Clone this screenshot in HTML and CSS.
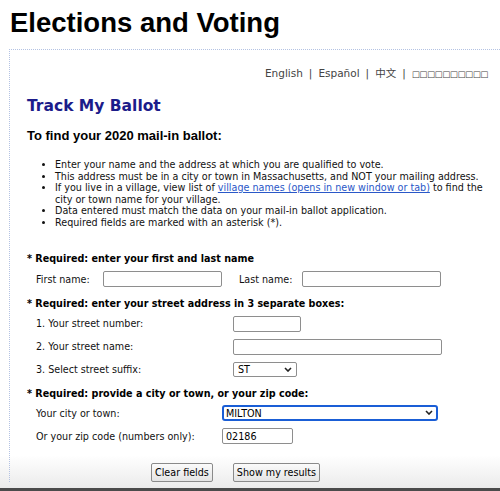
FILE: index.html
```html
<!DOCTYPE html>
<html lang="en">

<head>
    <meta charset="UTF-8">
    <meta name="viewport" content="width=device-width, initial-scale=1.0">
    <title>Track My Ballot</title>
    <link rel="stylesheet" href="styles.css">
</head>

<body>
    <h1 class="page-title">Elections and Voting</h1>

    <div class="panel">
        <div class="lang-bar">
            <a href="#">English</a><span class="sep">|</span><a href="#">Español</a><span class="sep">|</span><a href="#">中文</a><span class="sep">|</span><a href="#" class="tofu">□□□□□□□□□□</a>
        </div>

        <h2 class="app-title">Track My Ballot</h2>
        <h3 class="intro">To find your 2020 mail-in ballot:</h3>

        <ul class="notes">
            <li>Enter your name and the address at which you are qualified to vote.</li>
            <li>This address must be in a city or town in Massachusetts, and NOT your mailing address.</li>
            <li>If you live in a village, view list of <a href="#">village names (opens in new window or tab)</a> to find the city or town name for your village.</li>
            <li>Data entered must match the data on your mail-in ballot application.</li>
            <li>Required fields are marked with an asterisk (*).</li>
        </ul>

        <form class="ballot-form" onsubmit="return false">
            <p class="req req-first">* Required: enter your first and last name</p>
            <div class="name-row">
                <label for="firstName" class="first-label">First name:</label>
                <input type="text" id="firstName" class="first-input">
                <label for="lastName" class="last-label">Last name:</label>
                <input type="text" id="lastName" class="last-input">
            </div>

            <p class="req">* Required: enter your street address in 3 separate boxes:</p>
            <div class="field-grid street-grid">
                <label for="streetNo">1. Your street number:</label>
                <input type="text" id="streetNo" class="w-number">

                <label for="streetName">2. Your street name:</label>
                <input type="text" id="streetName" class="w-street">

                <label for="suffix">3. Select street suffix:</label>
                <span class="select-wrap w-suffix">
                    <select id="suffix">
                        <option>ST</option>
                        <option>AVE</option>
                        <option>RD</option>
                    </select>
                    <svg class="chev" width="8" height="5" viewBox="0 0 8 5"><path d="M1 1l3 3 3-3" fill="none" stroke="#222" stroke-width="1.6"/></svg>
                </span>
            </div>

            <p class="req">* Required: provide a city or town, or your zip code:</p>
            <div class="field-grid city-grid">
                <label for="city">Your city or town:</label>
                <span class="select-wrap w-city">
                    <select id="city" class="focused">
                        <option>MILTON</option>
                    </select>
                    <svg class="chev" width="8" height="5" viewBox="0 0 8 5"><path d="M1 1l3 3 3-3" fill="none" stroke="#222" stroke-width="1.6"/></svg>
                </span>

                <label for="zip">Or your zip code (numbers only):</label>
                <input type="text" id="zip" class="w-zip" value="02186">
            </div>

            <div class="actions">
                <button type="reset">Clear fields</button>
                <button type="submit">Show my results</button>
            </div>
        </form>
    </div>
</body>

</html>
```

FILE: styles.css
```css
html {
    height: 491px;
}

body {
    margin: 0;
    height: 491px;
    overflow: hidden;
    font-family: "DejaVu Sans", Verdana, sans-serif;
    font-size: 9.6px;
    color: #111;
    background: linear-gradient(to bottom, #fff 0, #fff 455px, #ebebeb 488px, #4b4b4b 488px, #4b4b4b 491px);
}

.page-title {
    margin: 8px 0 11px 10px;
    font-family: "Liberation Sans", Arial, sans-serif;
    font-size: 27.5px;
    line-height: 30px;
    font-weight: bold;
    color: #000;
}

.panel {
    margin-left: 9px;
    padding: 17px 12px 0 17px;
    border-top: 1px dotted #b3c2e3;
    border-left: 1px dotted #b3c2e3;
}

.lang-bar {
    text-align: right;
    font-size: 10.5px;
    line-height: 13px;
    color: #444;
}

.lang-bar a {
    color: #444;
    text-decoration: none;
    font-family: "DejaVu Sans", "Noto Sans CJK SC", sans-serif;
}

.lang-bar .sep {
    margin: 0 6px;
}

.lang-bar .tofu {
    font-size: 8.5px;
    letter-spacing: -0.4px;
}

.app-title {
    margin: 16px 0 0;
    font-size: 15.5px;
    line-height: 19px;
    color: #1c1c8a;
}

.intro {
    margin: 12px 0 0;
    font-family: "Liberation Sans", Arial, sans-serif;
    font-size: 13px;
    line-height: 15px;
    color: #000;
}

.notes {
    margin: 16px 0 0;
    padding-left: 28px;
    line-height: 11.6px;
}

.notes a {
    color: #2a58c8;
}

.req {
    margin: 11px 0 0;
    font-weight: bold;
    line-height: 11.5px;
    color: #000;
}

.req-first {
    margin-top: 24px;
}

.name-row {
    display: flex;
    align-items: center;
    margin-top: 7px;
    padding-left: 9px;
}

.first-label {
    width: 67px;
}

.first-input {
    width: 119px;
}

.last-label {
    width: 63px;
    margin-left: 17px;
}

.last-input {
    width: 139px;
}

.field-grid {
    display: grid;
    align-items: center;
    justify-items: start;
    row-gap: 7px;
    margin-top: 6px;
    padding-left: 9px;
}

.street-grid {
    grid-template-columns: 197px auto;
}

.city-grid {
    grid-template-columns: 186px auto;
}

input[type="text"],
select {
    box-sizing: border-box;
    height: 16px;
    margin: 0;
    padding: 0 3px;
    font-family: "DejaVu Sans", Verdana, sans-serif;
    font-size: 9.6px;
    color: #000;
    background: #fff;
    border: 1px solid #8e8e8e;
    border-radius: 2px;
    outline: none;
}

.w-number {
    width: 68px;
}

.w-street {
    width: 209px;
}

.w-zip {
    width: 71px;
    height: 17px;
}

.select-wrap {
    position: relative;
    display: block;
}

.select-wrap select {
    width: 100%;
    appearance: none;
    -webkit-appearance: none;
}

.w-suffix {
    width: 64px;
}

.w-suffix select {
    height: 15px;
    padding-left: 4px;
}

.w-city {
    width: 216px;
}

select.focused {
    border: 2px solid #1a5ed6;
    border-radius: 3px;
    padding-left: 2px;
}

.chev {
    position: absolute;
    right: 5px;
    top: 5px;
}

.actions {
    display: flex;
    gap: 20px;
    margin-top: 19px;
    padding-left: 124px;
}

button {
    box-sizing: border-box;
    height: 19px;
    padding: 0 3px;
    font-family: "DejaVu Sans", Verdana, sans-serif;
    font-size: 9.6px;
    color: #000;
    background: linear-gradient(#fbfbfb, #e4e4e4);
    border: 1px solid #8a8a8a;
    border-radius: 2px;
    cursor: pointer;
}
```
